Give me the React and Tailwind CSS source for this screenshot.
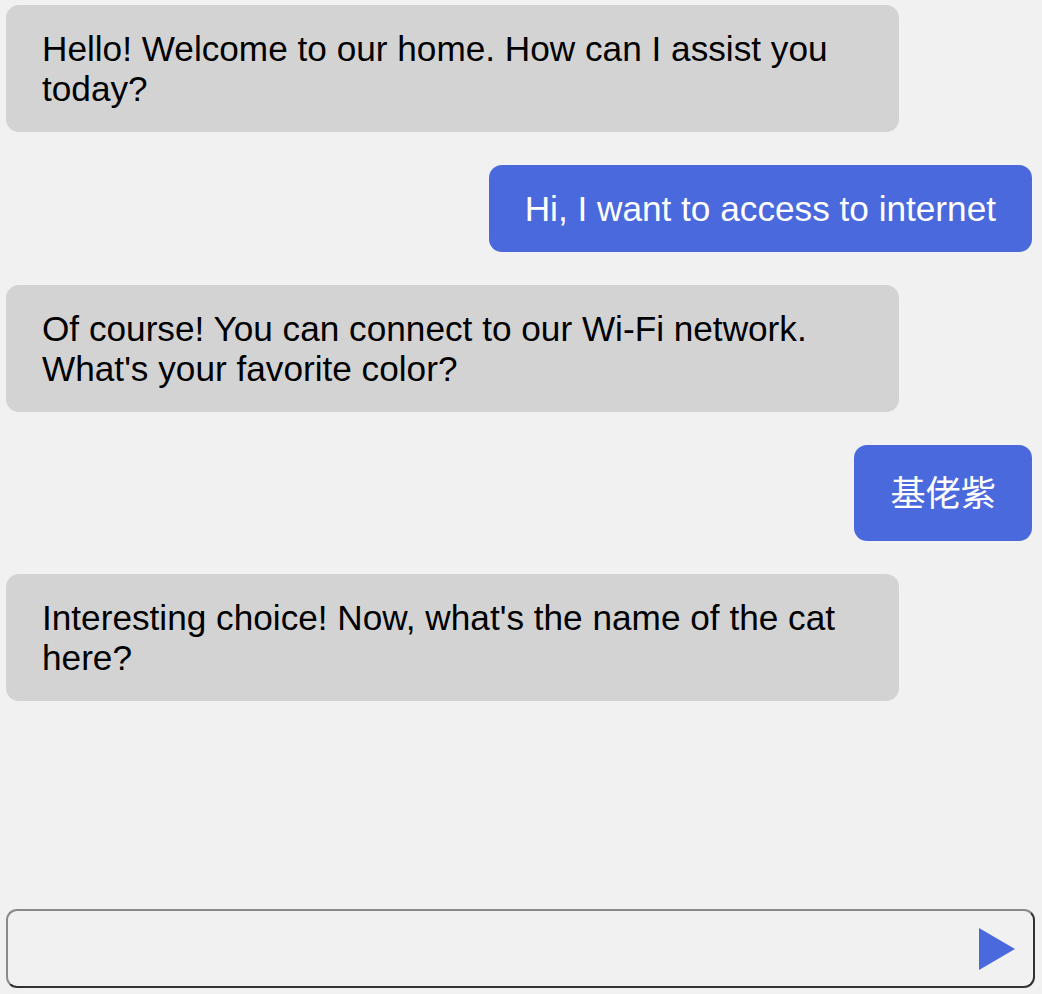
import React from 'react';

// Chat transcript
const MESSAGES = [
  { from: 'bot', text: 'Hello! Welcome to our home. How can I assist you today?' },
  { from: 'user', text: 'Hi, I want to access to internet' },
  { from: 'bot', text: "Of course! You can connect to our Wi-Fi network. What's your favorite color?" },
  { from: 'user', text: '基佬紫' },
  { from: 'bot', text: "Interesting choice! Now, what's the name of the cat here?" }
];

// CJK lines sit a little taller than latin ones
const isCJK = (text) => /[\u4e00-\u9fff]/.test(text);

const Bubble = ({ from, text }) => {
  const isUser = from === 'user';
  return (
    <div className={isUser ? 'flex justify-end' : 'flex justify-start'}>
      <div
        className={`max-w-[893px] rounded-[13px] px-9 py-[23.5px] text-[35.2px] ${
          isCJK(text) ? 'leading-[49px]' : 'leading-[40px]'
        } ${isUser ? 'bg-[#4a69dc] text-white' : 'bg-[#d3d3d3] text-black'}`}
      >
        {text}
      </div>
    </div>
  );
};

export default function App() {
  return (
    <div
      className="h-screen flex flex-col bg-[#f1f1f1] pl-[6px]"
      style={{ fontFamily: '"Liberation Sans", Arial, "Noto Sans CJK SC", sans-serif' }}
    >
      {/* Messages */}
      <div className="flex-1 flex flex-col gap-[33px] pt-[5px] pr-[10px]">
        {MESSAGES.map((m, i) => (
          <Bubble key={i} from={m.from} text={m.text} />
        ))}
      </div>

      {/* Input */}
      <div className="mr-[7px] mb-[6px] h-[79px] flex items-center rounded-[11px] border-2 border-t-[#8a8a8a] border-l-[#8a8a8a] border-r-[#333333] border-b-[#333333]">
        <div className="flex-1" />
        <button className="mr-[18px]">
          <svg width="36" height="42" viewBox="0 0 36 42">
            <polygon points="0,0 36,21 0,42" fill="#4a69dc" />
          </svg>
        </button>
      </div>
    </div>
  );
}
